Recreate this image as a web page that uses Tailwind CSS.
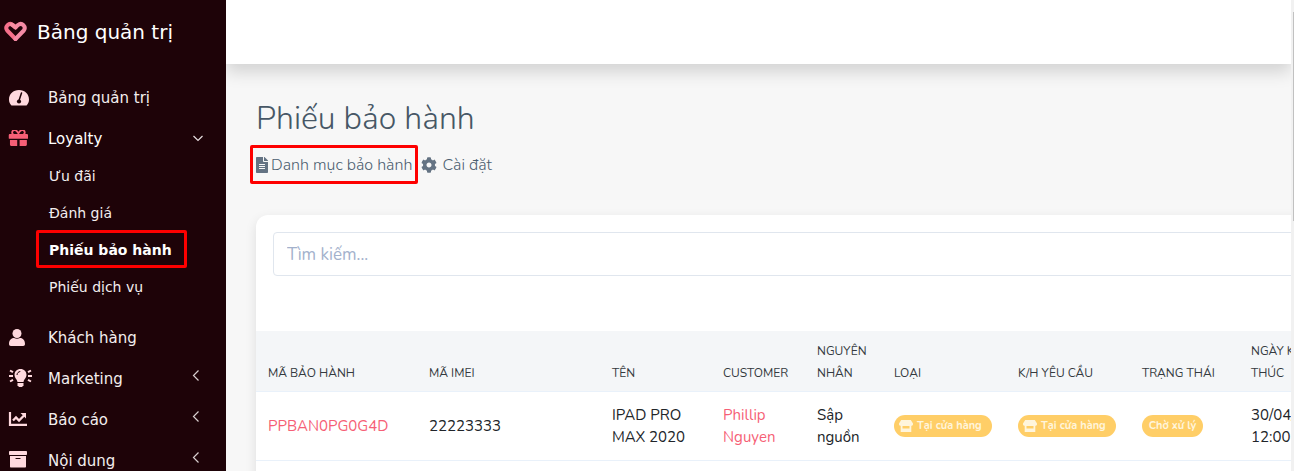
<!DOCTYPE html>
<html lang="vi">
<head>
<meta charset="UTF-8" />
<meta name="viewport" content="width=device-width, initial-scale=1" />
<title>Phiếu bảo hành</title>
<script src="https://cdn.jsdelivr.net/npm/@tailwindcss/browser@4"></script>
</head>
<body class="flex h-screen overflow-hidden bg-[#f7f7f7] font-['Nunito','Open_Sans',sans-serif] text-[#212529]">

  <!-- SIDEBAR -->
  <aside class="w-[226px] shrink-0 overflow-hidden bg-[#1e0308] font-['DejaVu_Sans',sans-serif] text-[15px] text-[#f3eeee]">
    <a href="#" class="flex h-16 items-center gap-[9px] pl-1 text-xl text-white">
      <svg class="h-6 w-6" viewBox="0 0 24 24" fill="none" stroke-linecap="round" stroke-linejoin="round" stroke-width="4">
        <path d="M11.500 19 3.200 10.500C0.500 7 5 1.800 9 5L11.500 7.300" stroke="#f6708b" />
        <path d="M11.500 19 19.800 10.500C22.500 7 18 1.800 14 5L11.500 7.300" stroke="#f48ba5" />
        <path d="M7.800 4.600 11.500 7.300" stroke="#f88fa3" />
      </svg>
      Bảng quản trị
    </a>

    <nav class="pt-4">
      <ul class="flex flex-col gap-1">
        <li>
          <a href="#" class="flex h-[37px] items-center pl-2">
            <span class="w-10"><svg class="h-[18px] w-[22px]" viewBox="0 2 22 18"><path fill="#ffd9de" d="M11 2C5.200 2 1 6 1 11.500c0 2.300.7 4.100 2 5.500.3.400.7.500 1.200.5h13.600c.5 0 .9-.1 1.200-.5 1.300-1.400 2-3.200 2-5.500C21 6 16.800 2 11 2z"/><path d="M13.500 5 11.200 12" stroke="#1e0308" stroke-width="1.500" stroke-linecap="round"/><circle cx="11" cy="13.500" r="2.100" fill="#1e0308"/></svg></span>
            Bảng quản trị
          </a>
        </li>
        <li>
          <button type="button" aria-expanded="true" class="flex h-[37px] w-full items-center pl-2 pr-[22px] text-left text-white">
            <span class="w-10"><svg class="h-5 w-5" viewBox="-20 56 530 530" fill="#f65f76"><path d="M32 448c0 17.700 14.300 32 32 32h160V320H32v128zm256 32h160c17.700 0 32-14.300 32-32V320H288v160zm192-320h-42.100c6.200-12.100 10.100-25.500 10.100-40 0-48.500-39.500-88-88-88-41.600 0-68.500 21.300-103 68.300-34.500-47-61.400-68.300-103-68.300-48.500 0-88 39.500-88 88 0 14.500 3.800 27.900 10.100 40H32c-17.700 0-32 14.300-32 32v80c0 8.800 7.200 16 16 16h480c8.800 0 16-7.200 16-16v-80c0-17.700-14.300-32-32-32zm-326.100 0c-22.100 0-40-17.900-40-40s17.900-40 40-40c19.900 0 34.600 3.300 86.100 80h-86.100zm206.100 0h-86.100c51.400-76.500 65.700-80 86.100-80 22.100 0 40 17.900 40 40s-17.900 40-40 40z"/></svg></span>
            <span class="grow">Loyalty</span>
            <svg class="h-3 w-3" viewBox="0 1 12 12" fill="none" stroke="#e8dfe0" stroke-width="1.200"><path d="M1.500 3 6 7.500 10.500 3"/></svg>
          </button>
          <ul class="-mt-px pb-[11px] pl-[49px] text-sm">
            <li><a href="#" class="flex h-[37px] items-center">Ưu đãi</a></li>
            <li><a href="#" class="flex h-9 items-center pt-[2px]">Đánh giá</a></li>
            <li><a href="#" class="-ml-[13px] flex h-[38px] w-[151px] items-center rounded-xs border-[3px] border-[#fe0000] pt-[2px] pl-[10px] font-bold whitespace-nowrap text-white">Phiếu bảo hành</a></li>
            <li><a href="#" class="flex h-[37px] items-center">Phiếu dịch vụ</a></li>
          </ul>
        </li>
        <li>
          <a href="#" class="flex h-[37px] items-center pl-2">
            <span class="w-10"><svg class="h-5 w-[18px]" viewBox="0 2 18 20" fill="#ffd9de"><circle cx="9" cy="6.500" r="4.500"/><path d="M1 17c0-3.500 2-6 5-6 1 .5 2 .8 3 .8s2-.3 3-.8c3 0 5 2.500 5 6 0 1.200-.7 2-1.800 2H2.800C1.700 19 1 18.200 1 17z"/></svg></span>
            Khách hàng
          </a>
        </li>
        <li>
          <button type="button" class="flex h-[37px] w-full items-center pl-2 pr-6 text-left">
            <span class="w-10"><svg class="h-5 w-6 overflow-visible" viewBox="0 2 24 20" fill="#ffd9de"><path d="M12.500 1C8.900 1 6.500 3.700 6.500 6.800c0 3.200 2.500 4.400 3 7.200h6c.5-2.800 3-4 3-7.200C18.500 3.700 16.100 1 12.500 1z"/><path d="M9.500 15h6v2.200L14 19h-3l-1.500-1.800z"/><path d="M9 7c.1-2 1.400-3.300 3.300-3.500" fill="none" stroke="#1e0308"/><path d="M2 2.500 5 4.200M1 8h4M2 13.500 5 11.800M23 2.500 20 4.200M24 8h-4M23 13.500 20 11.800" stroke="#ffd9de" stroke-width="2"/></svg></span>
            <span class="grow">Marketing</span>
            <svg class="h-3 w-3 -translate-y-1" viewBox="0 0 12 12" fill="none" stroke="#d8cfd0" stroke-width="1.200"><path d="M8.500 0.500 3.500 5.500 8.500 10.500"/></svg>
          </button>
        </li>
        <li>
          <button type="button" class="flex h-[37px] w-full items-center pl-2 pr-6 text-left">
            <span class="w-10"><svg class="h-5 w-5" viewBox="0 2 20 20" fill="none" stroke="#ffd9de"><path d="M2 3v12.800h17" stroke-width="2.200"/><path d="M5 11.500 8 8.500 11 11.500 16 6.500" stroke-width="2.300"/><path d="M12.500 4H18v5.500z" fill="#ffd9de" stroke="none"/></svg></span>
            <span class="grow">Báo cáo</span>
            <svg class="h-3 w-3 -translate-y-1" viewBox="0 0 12 12" fill="none" stroke="#d8cfd0" stroke-width="1.200"><path d="M8.500 0.500 3.500 5.500 8.500 10.500"/></svg>
          </button>
        </li>
        <li>
          <button type="button" class="flex h-[37px] w-full items-center pl-2 pr-6 text-left">
            <span class="w-10"><svg class="h-5 w-5 overflow-visible" viewBox="0 2 20 20" fill="#ffd9de"><rect x="1" y="1" width="18" height="4" rx="0.800"/><path d="M2 6h16v10.500c0 .6-.4 1-1 1H3c-.6 0-1-.4-1-1z"/><path d="M8 8.500h4" stroke="#1e0308" stroke-width="1.200" stroke-linecap="round"/></svg></span>
            <span class="grow">Nội dung</span>
            <svg class="h-3 w-3 -translate-y-1" viewBox="0 0 12 12" fill="none" stroke="#d8cfd0" stroke-width="1.200"><path d="M8.500 0.500 3.500 5.500 8.500 10.500"/></svg>
          </button>
        </li>
      </ul>
    </nav>
  </aside>

  <div class="flex min-w-0 grow flex-col overflow-hidden">
    <!-- TOP BAR -->
    <header class="h-16 shrink-0 bg-white shadow-[0_8px_16px_rgba(0,0,0,0.15)]"></header>

    <main class="grow pl-[30px] pt-[33px]">
      <h1 class="text-[32px] leading-11 font-light text-[#475766]">Phiếu bảo hành</h1>

      <div class="-ml-[6px] mt-1 flex items-center gap-[3px] text-base font-light text-[#4c5e70]">
        <a href="#" class="flex h-[39px] items-center gap-[3px] rounded-xs border-[3px] border-[#fe0000] px-[3px]">
          <svg class="h-4 w-3" viewBox="0 0 384 512" fill="#647383"><path d="M224 136V0H24C10.700 0 0 10.700 0 24v464c0 13.300 10.700 24 24 24h336c13.300 0 24-10.700 24-24V160H248c-13.200 0-24-10.800-24-24zm64 236c0 6.600-5.400 12-12 12H108c-6.600 0-12-5.400-12-12v-8c0-6.600 5.400-12 12-12h168c6.600 0 12 5.400 12 12v8zm0-64c0 6.600-5.400 12-12 12H108c-6.600 0-12-5.400-12-12v-8c0-6.600 5.400-12 12-12h168c6.600 0 12 5.400 12 12v8zm0-72v8c0 6.600-5.400 12-12 12H108c-6.600 0-12-5.400-12-12v-8c0-6.600 5.400-12 12-12h168c6.600 0 12 5.400 12 12zm96-114.100v6.100H256V0h6.100c6.400 0 12.500 2.500 17 7l97.900 98c4.500 4.500 7 10.600 7 16.900z"/></svg>
          Danh mục bảo hành
        </a>
        <a href="#" class="flex items-center gap-[5px]">
          <svg class="h-4 w-4" viewBox="0 0 512 512" fill="#647383"><path d="M487.400 315.700l-42.600-24.600c4.300-23.200 4.300-47 0-70.200l42.600-24.600c4.900-2.800 7.100-8.600 5.500-14-11.100-35.600-30-67.800-54.700-94.600-3.800-4.100-10-5.100-14.800-2.300L380.800 110c-17.900-15.400-38.500-27.300-60.800-35.100V25.800c0-5.600-3.900-10.500-9.400-11.700-36.700-8.200-74.300-7.800-109.200 0-5.500 1.200-9.400 6.100-9.400 11.700V75c-22.200 7.900-42.800 19.800-60.800 35.100L88.700 85.500c-4.900-2.800-11-1.900-14.800 2.300-24.700 26.700-43.600 58.900-54.700 94.600-1.700 5.400.6 11.200 5.500 14L67.300 221c-4.300 23.200-4.300 47 0 70.200l-42.600 24.600c-4.900 2.800-7.100 8.600-5.500 14 11.100 35.600 30 67.800 54.700 94.600 3.800 4.100 10 5.100 14.800 2.300l42.600-24.600c17.900 15.400 38.500 27.300 60.800 35.100v49.200c0 5.600 3.900 10.500 9.400 11.700 36.700 8.200 74.300 7.800 109.200 0 5.500-1.200 9.400-6.100 9.400-11.700v-49.200c22.200-7.900 42.800-19.800 60.800-35.100l42.600 24.600c4.900 2.800 11 1.900 14.800-2.300 24.700-26.700 43.600-58.900 54.700-94.600 1.500-5.500-.7-11.300-5.600-14.100zM256 336c-44.100 0-80-35.900-80-80s35.900-80 80-80 80 35.900 80 80-35.900 80-80 80z"/></svg>
          Cài đặt
        </a>
      </div>

      <!-- CARD -->
      <section class="mt-[31px] min-h-80 w-[1280px] rounded-xl bg-white shadow-[0_4px_12px_rgba(0,0,0,0.1)]">
        <div class="px-[17px] pt-[17px] pb-[55px]">
          <input type="text" id="search" aria-label="Tìm kiếm" placeholder="Tìm kiếm..."
            class="block h-11 w-full rounded border border-[#e0e6ee] px-[13px] text-[17px] outline-none placeholder:text-[#a3b1cc]" />
        </div>

        <table class="w-full table-fixed text-left text-[15px] leading-[22px]">
          <colgroup>
            <col class="w-[161px]" />
            <col class="w-[183px]" />
            <col class="w-[111px]" />
            <col class="w-[94px]" />
            <col class="w-[77px]" />
            <col class="w-[124px]" />
            <col class="w-[124px]" />
            <col class="w-[109px]" />
            <col />
          </colgroup>
          <thead class="bg-[#f4f6f8] text-xs leading-[22px] text-[#343a40] uppercase">
            <tr class="border-b border-[#e9f1fa] align-bottom">
              <th class="px-3 pt-[9px] pb-[7px] font-normal">Mã bảo hành</th>
              <th class="px-3 pt-[9px] pb-[7px] font-normal">Mã IMEI</th>
              <th class="px-3 pt-[9px] pb-[7px] font-normal">Tên</th>
              <th class="px-3 pt-[9px] pb-[7px] font-normal">Customer</th>
              <th class="pl-3 pt-[9px] pb-[7px] font-normal">Nguyên<br />nhân</th>
              <th class="px-3 pt-[9px] pb-[7px] font-normal">Loại</th>
              <th class="px-3 pt-[9px] pb-[7px] font-normal">K/H yêu cầu</th>
              <th class="px-3 pt-[9px] pb-[7px] font-normal whitespace-nowrap">Trạng thái</th>
              <th class="px-3 pt-[9px] pb-[7px] font-normal">Ngày kết<br />thúc</th>
            </tr>
          </thead>
          <tbody>
            <tr class="border-b border-[#e9f1fa]">
              <td class="px-3 py-3"><a href="#" class="text-[#f65f76]">PPBAN0PG0G4D</a></td>
              <td class="px-3 py-3">22223333</td>
              <td class="px-3 py-3 whitespace-nowrap">IPAD PRO<br />MAX 2020</td>
              <td class="px-3 py-3"><a href="#" class="text-[#f65f76]">Phillip<br />Nguyen</a></td>
              <td class="px-3 py-3">Sập<br />nguồn</td>
              <td class="px-3 py-3">
                <span class="flex h-[22px] w-[98px] items-center gap-1 rounded-full bg-[#ffce67] pl-[5px] text-[11px] font-bold whitespace-nowrap text-[#fff5dc]">
                  <svg class="h-3 w-[14px]" viewBox="0 0 14 12" fill="#fff5dc"><path d="M2.200 0h9.600L14 3.500c.3 1.500-.7 2.300-1.700 2.300V12H1.700V5.800C.7 5.800-.3 5 0 3.500zM3.500 6v2.500h7V6z" fill-rule="evenodd"/></svg>
                  Tại cửa hàng
                </span>
              </td>
              <td class="px-3 py-3">
                <span class="flex h-[22px] w-[98px] items-center gap-1 rounded-full bg-[#ffce67] pl-[5px] text-[11px] font-bold whitespace-nowrap text-[#fff5dc]">
                  <svg class="h-3 w-[14px]" viewBox="0 0 14 12" fill="#fff5dc"><path d="M2.200 0h9.600L14 3.500c.3 1.500-.7 2.300-1.700 2.300V12H1.700V5.800C.7 5.800-.3 5 0 3.500zM3.500 6v2.500h7V6z" fill-rule="evenodd"/></svg>
                  Tại cửa hàng
                </span>
              </td>
              <td class="px-3 py-3">
                <span class="flex h-[22px] w-[61px] items-center justify-center rounded-full bg-[#ffce67] text-[11px] font-bold whitespace-nowrap text-[#fff5dc]">Chờ xử lý</span>
              </td>
              <td class="px-3 py-3">30/04/2021<br />12:00</td>
            </tr>
          </tbody>
        </table>
      </section>
    </main>
  </div>

  <!-- SCROLLBAR -->
  <div class="flex w-[3px] shrink-0 flex-col items-end bg-[#f1f1f1] pt-3">
    <div class="h-[209px] w-px bg-[#c1c1c1]"></div>
  </div>

</body>
</html>
